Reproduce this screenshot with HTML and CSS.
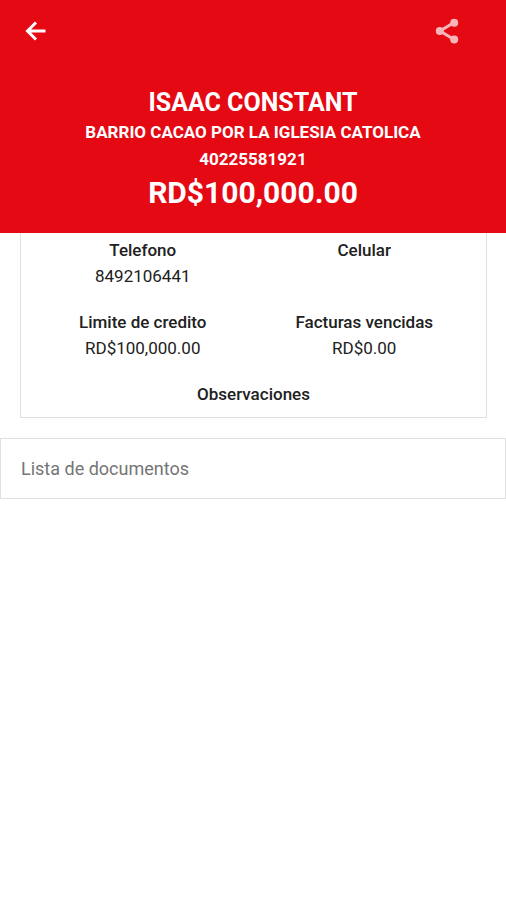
FILE: index.html
```html
<!DOCTYPE html>
<html lang="es">
<head>
<meta charset="utf-8">
<meta name="viewport" content="width=device-width, initial-scale=1">
<title>Isaac Constant</title>
<link rel="stylesheet" href="styles.css">
</head>
<body>
<header class="hero">
  <nav class="toolbar">
    <button class="icon-button" type="button" aria-label="Volver">
      <svg class="icon" viewBox="0 0 28 28"><path class="arrow" d="M23.500 14H6M14 5.500L5.500 14l8.500 8.500"/></svg>
    </button>
    <button class="icon-button share" type="button" aria-label="Compartir">
      <svg class="icon" viewBox="0 0 28 28"><path class="link" d="M21 5.500L7 14l14 8.500"/><circle cx="21.200" cy="5.700" r="4"/><circle cx="6.800" cy="14" r="4"/><circle cx="21.200" cy="22.500" r="4"/></svg>
    </button>
  </nav>
  <h1 class="name">ISAAC CONSTANT</h1>
  <p class="line">BARRIO CACAO POR LA IGLESIA CATOLICA</p>
  <p class="line">40225581921</p>
  <p class="amount">RD$100,000.00</p>
</header>
<main>
  <section class="card">
    <dl class="details">
      <div class="field"><dt>Telefono</dt><dd>8492106441</dd></div>
      <div class="field"><dt>Celular</dt><dd></dd></div>
      <div class="field"><dt>Limite de credito</dt><dd>RD$100,000.00</dd></div>
      <div class="field"><dt>Facturas vencidas</dt><dd>RD$0.00</dd></div>
      <div class="field wide"><dt>Observaciones</dt></div>
    </dl>
  </section>
  <section class="documents">
    <h2 class="documents-title">Lista de documentos</h2>
  </section>
</main>
</body>
</html>
```

FILE: styles.css
```css
* {
  box-sizing: border-box;
}

body {
  margin: 0;
  background: #fff;
  color: #212121;
  font-family: Roboto, "Liberation Sans", sans-serif;
}

h1, h2, p, dl, dd {
  margin: 0;
}

.hero {
  padding-bottom: 20px;
  background: #e50914;
  color: #fff;
  text-align: center;
}

.toolbar {
  display: flex;
  justify-content: space-between;
  padding: 17px 45px 17px 22px;
  margin-bottom: 24px;
}

.icon-button {
  display: flex;
  padding: 0;
  border: 0;
  background: none;
  color: inherit;
}

.share {
  opacity: 0.7;
}

.icon {
  width: 28px;
  height: 28px;
  fill: currentColor;
}

.arrow,
.link {
  fill: none;
  stroke: currentColor;
  stroke-width: 3;
}

.name {
  font-size: 25px;
  font-weight: 700;
  line-height: 33px;
}

.line {
  font-size: 17px;
  font-weight: 700;
  line-height: 27px;
}

.amount {
  font-size: 30px;
  font-weight: 700;
  line-height: 40px;
}

.card {
  margin: 0 19px 20px 20px;
  padding: 4px 11px 10px;
  border: 1px solid #e0e0e0;
  border-top: 0;
}

.details {
  display: grid;
  grid-template-columns: 1fr 1fr;
  row-gap: 20px;
  text-align: center;
}

.field {
  font-size: 17px;
  line-height: 26px;
}

.field dt {
  font-weight: 500;
}

.wide {
  grid-column: 1 / -1;
}

.documents {
  padding: 16px 20px;
  border: 1px solid #e0e0e0;
}

.documents-title {
  color: #757575;
  font-size: 18px;
  font-weight: 400;
  line-height: 27px;
}
```
